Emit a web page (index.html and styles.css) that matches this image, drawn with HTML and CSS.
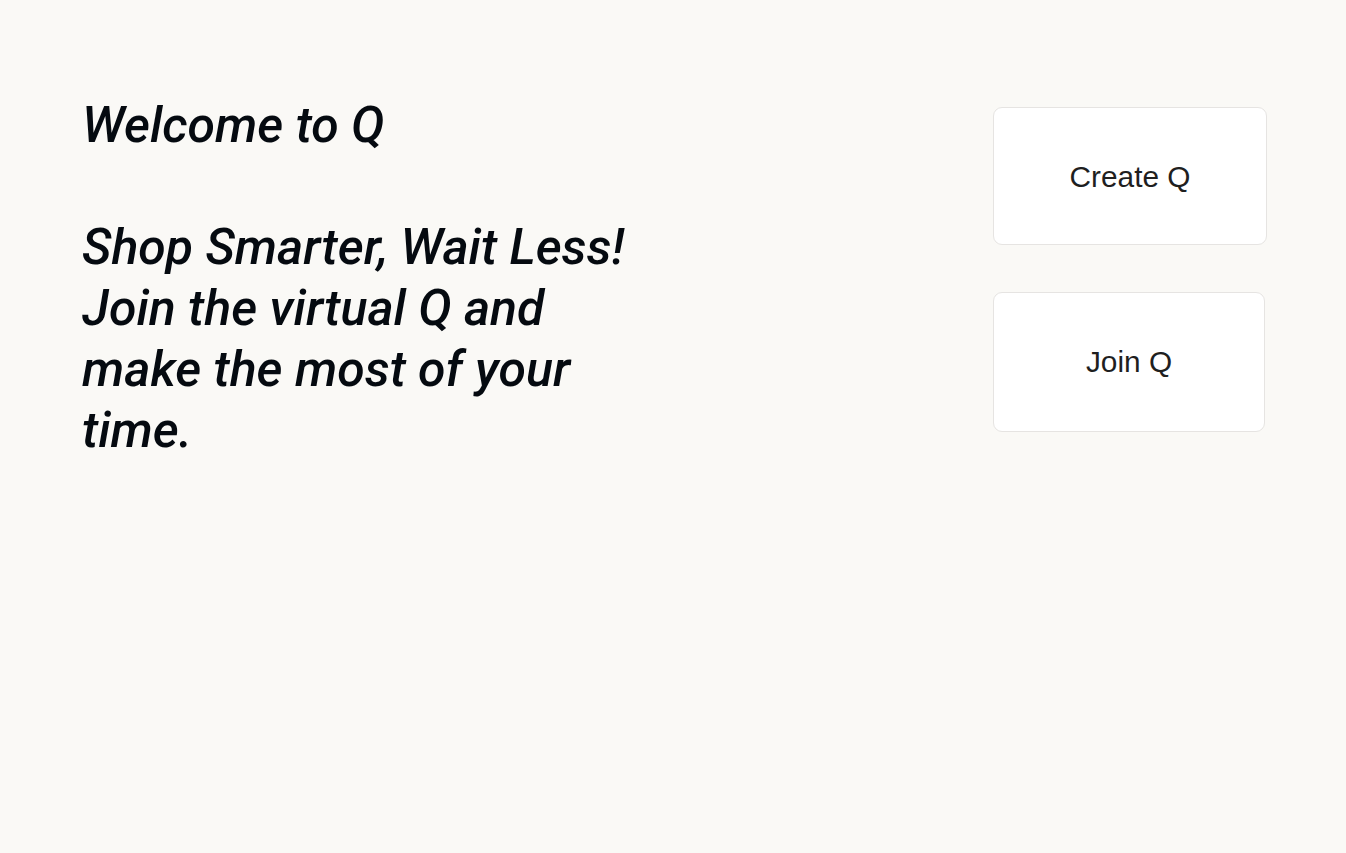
FILE: index.html
```html
<!DOCTYPE html>
<html lang="en">
<head>
<meta charset="utf-8">
<title>Welcome to Q</title>
<link rel="stylesheet" href="styles.css">
</head>
<body>
<main class="page">
  <section class="intro">
    <h1 class="intro-text">Welcome to Q<br><br>Shop Smarter, Wait Less! Join the virtual Q and make the most of your time.</h1>
  </section>
  <nav class="actions">
    <button class="action action-create" type="button">Create Q</button>
    <button class="action action-join" type="button">Join Q</button>
  </nav>
</main>
</body>
</html>
```

FILE: styles.css
```css
html, body {
  margin: 0;
  padding: 0;
  background: #faf9f6;
}

body {
  min-height: 853px;
}

.page {
  display: flex;
  justify-content: space-between;
  align-items: flex-start;
  padding: 0 79px 0 82px;
}

.intro {
  width: 560px;
  padding-top: 95px;
}

.intro-text {
  margin: 0;
  font-family: Roboto, "Noto Sans", sans-serif;
  font-style: italic;
  font-weight: 500;
  font-size: 50px;
  line-height: 61px;
  color: #050a10;
}

.actions {
  display: flex;
  flex-direction: column;
  gap: 47px;
  padding-top: 107px;
  width: 274px;
}

.action {
  display: flex;
  align-items: center;
  justify-content: center;
  background: #ffffff;
  border: 1px solid #e6e4e2;
  border-radius: 9px;
  font-family: "Liberation Sans", Arial, sans-serif;
  font-size: 29.8px;
  color: #1f1f1f;
  padding: 0;
  cursor: pointer;
}

.action-create {
  width: 274px;
  height: 138px;
  padding-top: 2px;
}

.action-join {
  width: 272px;
  height: 140px;
}
```
